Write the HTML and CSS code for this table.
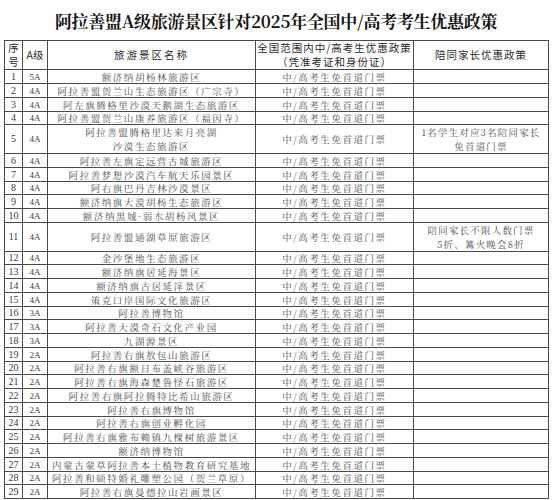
FILE: index.html
```html
<!DOCTYPE html>
<html lang="zh">
<head>
<meta charset="utf-8">
<link rel="stylesheet" href="styles.css">
</head>
<body>
<div class="page">
  <h1 class="title">阿拉善盟A级旅游景区针对2025年全国中/高考考生优惠政策</h1>
  <table class="grid">
    <colgroup>
      <col class="c-no"><col class="c-lv"><col class="c-name"><col class="c-pol"><col class="c-fam">
    </colgroup>
    <thead>
      <tr class="head">
        <th class="h-no"><span class="hl">序</span><span class="hl">号</span></th>
        <th class="h-lv">A级</th>
        <th class="h-name">旅游景区名称</th>
        <th class="h-pol"><span class="hl">全国范围内中/高考生优惠政策</span><span class="hl">（凭准考证和身份证）</span></th>
        <th class="h-fam">陪同家长优惠政策</th>
      </tr>
    </thead>
    <tbody>
      <tr><td class="no">1</td><td class="lv">5A</td><td class="name">额济纳胡杨林旅游区</td><td class="pol">中/高考生免首道门票</td><td class="fam"></td></tr>
      <tr><td class="no">2</td><td class="lv">4A</td><td class="name">阿拉善盟贺兰山生态旅游区（广宗寺）</td><td class="pol">中/高考生免首道门票</td><td class="fam"></td></tr>
      <tr><td class="no">3</td><td class="lv">4A</td><td class="name">阿左旗腾格里沙漠天鹅湖生态旅游区</td><td class="pol">中/高考生免首道门票</td><td class="fam"></td></tr>
      <tr class="short"><td class="no">4</td><td class="lv">4A</td><td class="name">阿拉善盟贺兰山康养旅游区（福因寺）</td><td class="pol">中/高考生免首道门票</td><td class="fam"></td></tr>
      <tr class="tall"><td class="no">5</td><td class="lv">4A</td><td class="name"><span class="ln">阿拉善盟腾格里达来月亮湖</span><span class="ln">沙漠生态旅游区</span></td><td class="pol">中/高考生免首道门票</td><td class="fam"><span class="ln">1名学生对应3名陪同家长</span><span class="ln">免首道门票</span></td></tr>
      <tr><td class="no">6</td><td class="lv">4A</td><td class="name">阿拉善左旗定远营古城旅游区</td><td class="pol">中/高考生免首道门票</td><td class="fam"></td></tr>
      <tr><td class="no">7</td><td class="lv">4A</td><td class="name">阿拉善梦想沙漠汽车航天乐园景区</td><td class="pol">中/高考生免首道门票</td><td class="fam"></td></tr>
      <tr class="short"><td class="no">8</td><td class="lv">4A</td><td class="name">阿右旗巴丹吉林沙漠景区</td><td class="pol">中/高考生免首道门票</td><td class="fam"></td></tr>
      <tr><td class="no">9</td><td class="lv">4A</td><td class="name">额济纳旗大漠胡杨生态旅游区</td><td class="pol">中/高考生免首道门票</td><td class="fam"></td></tr>
      <tr><td class="no">10</td><td class="lv">4A</td><td class="name">额济纳黑城·弱水胡杨风景区</td><td class="pol">中/高考生免首道门票</td><td class="fam"></td></tr>
      <tr class="tall"><td class="no">11</td><td class="lv">4A</td><td class="name">阿拉善盟通湖草原旅游区</td><td class="pol">中/高考生免首道门票</td><td class="fam"><span class="ln">陪同家长不限人数门票</span><span class="ln">5折、篝火晚会8折</span></td></tr>
      <tr class="short"><td class="no">12</td><td class="lv">4A</td><td class="name">金沙堡地生态旅游区</td><td class="pol">中/高考生免首道门票</td><td class="fam"></td></tr>
      <tr><td class="no">13</td><td class="lv">4A</td><td class="name">额济纳旗居延海景区</td><td class="pol">中/高考生免首道门票</td><td class="fam"></td></tr>
      <tr><td class="no">14</td><td class="lv">4A</td><td class="name">额济纳旗古居延泽景区</td><td class="pol">中/高考生免首道门票</td><td class="fam"></td></tr>
      <tr><td class="no">15</td><td class="lv">4A</td><td class="name">策克口岸国际文化旅游区</td><td class="pol">中/高考生免首道门票</td><td class="fam"></td></tr>
      <tr class="short"><td class="no">16</td><td class="lv">3A</td><td class="name">阿拉善博物馆</td><td class="pol">中/高考生免首道门票</td><td class="fam"></td></tr>
      <tr><td class="no">17</td><td class="lv">3A</td><td class="name">阿拉善大漠奇石文化产业园</td><td class="pol">中/高考生免首道门票</td><td class="fam"></td></tr>
      <tr><td class="no">18</td><td class="lv">3A</td><td class="name">九湖源景区</td><td class="pol">中/高考生免首道门票</td><td class="fam"></td></tr>
      <tr><td class="no">19</td><td class="lv">2A</td><td class="name">阿拉善右旗敖包山旅游区</td><td class="pol">中/高考生免首道门票</td><td class="fam"></td></tr>
      <tr class="short"><td class="no">20</td><td class="lv">2A</td><td class="name">阿拉善右旗额日布盖峡谷旅游区</td><td class="pol">中/高考生免首道门票</td><td class="fam"></td></tr>
      <tr><td class="no">21</td><td class="lv">2A</td><td class="name">阿拉善右旗海森楚鲁怪石旅游区</td><td class="pol">中/高考生免首道门票</td><td class="fam"></td></tr>
      <tr><td class="no">22</td><td class="lv">2A</td><td class="name">阿拉善右旗阿拉腾特比希山旅游区</td><td class="pol">中/高考生免首道门票</td><td class="fam"></td></tr>
      <tr><td class="no">23</td><td class="lv">2A</td><td class="name">阿拉善右旗博物馆</td><td class="pol">中/高考生免首道门票</td><td class="fam"></td></tr>
      <tr class="short"><td class="no">24</td><td class="lv">2A</td><td class="name">阿拉善右旗创业孵化园</td><td class="pol">中/高考生免首道门票</td><td class="fam"></td></tr>
      <tr><td class="no">25</td><td class="lv">2A</td><td class="name">阿拉善右旗雅布赖镇九棵树旅游景区</td><td class="pol">中/高考生免首道门票</td><td class="fam"></td></tr>
      <tr><td class="no">26</td><td class="lv">2A</td><td class="name">额济纳博物馆</td><td class="pol">中/高考生免首道门票</td><td class="fam"></td></tr>
      <tr><td class="no">27</td><td class="lv">2A</td><td class="name">内蒙古蒙草阿拉善本土植物教育研究基地</td><td class="pol">中/高考生免首道门票</td><td class="fam"></td></tr>
      <tr class="short"><td class="no">28</td><td class="lv">2A</td><td class="name">阿拉善和硕特婚礼雕塑公园（贺兰草原）</td><td class="pol">中/高考生免首道门票</td><td class="fam"></td></tr>
      <tr><td class="no">29</td><td class="lv">2A</td><td class="name">阿拉善右旗曼德拉山岩画景区</td><td class="pol">中/高考生免首道门票</td><td class="fam"></td></tr>
    </tbody>
  </table>
</div>
</body>
</html>
```
FILE: styles.css
```css
html, body {
  margin: 0;
  padding: 0;
  background: #ffffff;
}

.page {
  width: 552px;
  height: 500px;
  overflow: hidden;
  padding: 0 0 0 4px;
  box-sizing: border-box;
  font-family: "Noto Serif CJK SC", "Noto Sans CJK SC", serif;
}

.title {
  margin: 0;
  height: 40px;
  line-height: 42px;
  text-align: center;
  font-size: 17px;
  letter-spacing: -0.3px;
  font-weight: 700;
  color: #151515;
  padding-right: 4px;
  white-space: nowrap;
}

.grid {
  table-layout: fixed;
  border-collapse: collapse;
  width: 544px;
  border: 1px solid #3a3a3a;
}

.c-no { width: 18px; }
.c-lv { width: 25px; }
.c-name { width: 208px; }
.c-pol { width: 158px; }
.c-fam { width: 135px; }

.grid th,
.grid td {
  border: 1px solid #4a4a4a;
  padding: 0;
  text-align: center;
  vertical-align: middle;
  white-space: nowrap;
  overflow: hidden;
}

.head {
  height: 28px;
}

.grid th {
  font-family: "Noto Sans CJK SC", sans-serif;
  font-weight: 400;
  color: #2a2a2a;
  font-size: 10.5px;
  line-height: 14px;
}

.hl,
.ln {
  display: block;
}

.h-no {
  font-size: 9.5px;
}

.h-lv {
  font-size: 9.5px;
}

.h-name {
  letter-spacing: 2px;
}

.h-pol {
  font-size: 9.5px;
  letter-spacing: 1px;
}

.h-fam {
  letter-spacing: 1px;
  font-size: 11px;
}

.grid tbody tr {
  height: 14px;
}

.grid tbody tr.short {
  height: 13px;
}

.grid tbody tr.tall {
  height: 29px;
}

.grid td {
  color: #4d4d4d;
  font-size: 9.5px;
  line-height: 12px;
}

.grid td.no,
.grid td.lv {
  font-family: "Liberation Serif", serif;
  font-size: 10px;
  color: #3c3c3c;
}

.grid td.lv {
  font-size: 9px;
}

.grid td.name,
.grid td.pol {
  letter-spacing: 1.55px;
}

.grid td.fam {
  letter-spacing: 1.2px;
}

.grid td .ln {
  line-height: 14px;
}
```
